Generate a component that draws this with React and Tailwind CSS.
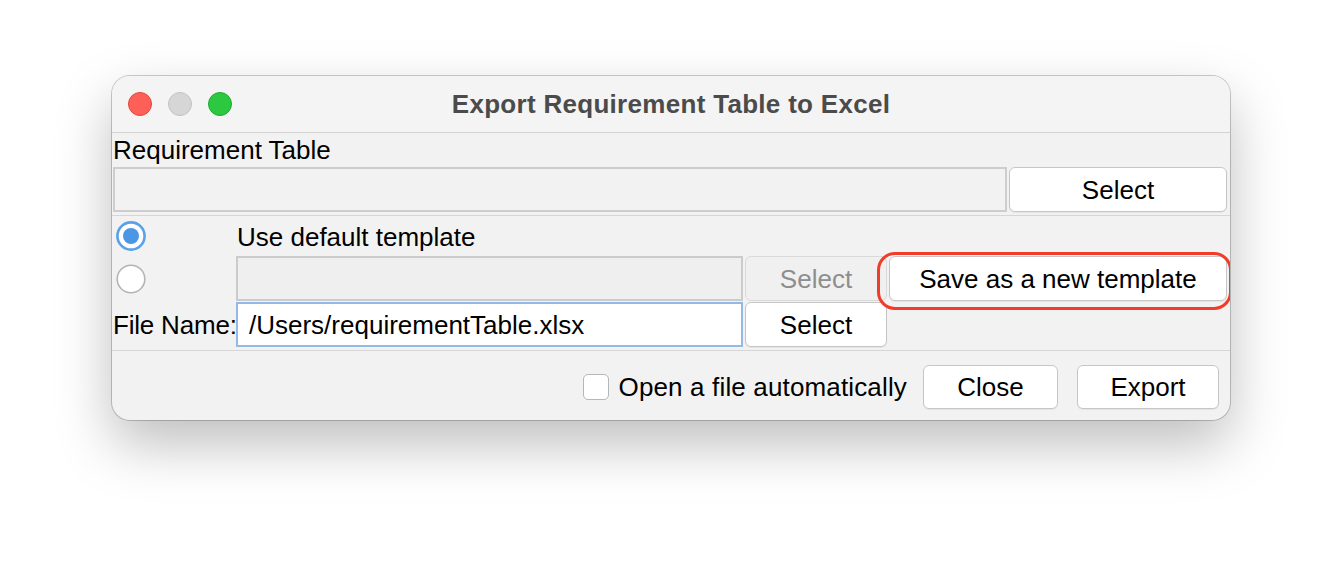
import React from "react";

const font = { fontFamily: '"Liberation Sans", Arial, Helvetica, sans-serif' };

function Btn({ children, className = "", disabled = false }) {
  return (
    <div
      className={
        "flex items-center justify-center rounded-[6px] border text-[26px] leading-none " +
        (disabled
          ? "bg-[#f0f0f0] border-[#d9d9d9] text-[#8e8e8e] "
          : "bg-white border-[#c6c6c6] text-black shadow-[0_1px_1px_rgba(0,0,0,0.06)] ") +
        className
      }
    >
      {children}
    </div>
  );
}

function RadioOn() {
  return (
    <svg width="30" height="30" viewBox="0 0 30 30">
      <circle cx="15" cy="15" r="13.6" fill="#ffffff" stroke="#5aa0ea" strokeWidth="2.6" />
      <circle cx="15" cy="15" r="8" fill="#4c96e6" />
    </svg>
  );
}

function RadioOff() {
  return (
    <svg width="30" height="30" viewBox="0 0 30 30">
      <circle cx="15" cy="15" r="13.8" fill="#ffffff" stroke="#b4b4b4" strokeWidth="1.6" />
    </svg>
  );
}

export default function App() {
  return (
    <div className="w-[1342px] h-[568px] bg-white pt-[76px] pl-[112px]" style={font}>
      <div className="w-[1118px] h-[344px] rounded-[18px] bg-[#f2f2f2] overflow-hidden flex flex-col shadow-[0_24px_56px_rgba(0,0,0,0.26),0_0_0_1px_rgba(0,0,0,0.2)]">
        {/* Title bar */}
        <div className="h-[57px] shrink-0 grid grid-cols-[1fr_auto_1fr] items-center border-b border-[#d3d3d3] bg-[#f4f4f4]">
          <div className="flex items-center gap-[16px] pl-[16px]">
            <div className="w-[24px] h-[24px] rounded-full bg-[#fe5f57] border border-[#e2463f]" />
            <div className="w-[24px] h-[24px] rounded-full bg-[#d6d6d6] border border-[#c2c2c2]" />
            <div className="w-[24px] h-[24px] rounded-full bg-[#2bc840] border border-[#1eab2e]" />
          </div>
          <div className="text-[26px] font-bold text-[#4b4b4b] tracking-[0.3px] leading-none">
            Export Requirement Table to Excel
          </div>
          <div />
        </div>

        {/* Label */}
        <div className="h-[34px] shrink-0 pl-[1px] text-[26px] leading-[34px] text-black">
          Requirement Table
        </div>

        {/* Row 1 */}
        <div className="h-[45px] shrink-0 flex gap-[2px] pl-[1px]">
          <div className="w-[894px] h-full bg-[#f2f2f2] border-2 border-[#cdcdcd]" />
          <Btn className="w-[218px] h-full">Select</Btn>
        </div>

        <div className="mt-[3px] h-px shrink-0 bg-[#d6d6d6]" />

        {/* Radio row 1 */}
        <div className="h-[40px] shrink-0 flex items-center pl-[1px]">
          <div className="w-[123px] pl-[3px] flex items-center">
            <RadioOn />
          </div>
          <div className="pl-[1px] pt-[2px] text-[26px] leading-none text-black">Use default template</div>
        </div>

        {/* Row 2 */}
        <div className="h-[45px] shrink-0 flex items-center pl-[1px]">
          <div className="w-[123px] pl-[3px] flex items-center">
            <RadioOff />
          </div>
          <div className="w-[507px] h-full bg-[#efefef] border-2 border-[#cbcbcb]" />
          <div className="w-[2px]" />
          <Btn disabled className="w-[142px] h-full">Select</Btn>
          <div className="w-[2px]" />
          <div className="relative w-[338px] h-full">
            <Btn className="w-full h-full">Save as a new template</Btn>
            <div className="absolute -left-[12px] -right-[5px] -top-[4px] -bottom-[9px] border-[3px] border-[#f03c28] rounded-[18px] pointer-events-none" />
          </div>
        </div>

        {/* Row 3 */}
        <div className="mt-px h-[45px] shrink-0 flex items-center pl-[1px]">
          <div className="w-[123px] text-[26px] leading-none text-black whitespace-nowrap tracking-[-0.2px]">File Name:</div>
          <div className="w-[507px] h-full bg-white border-2 border-[#94b9e6] flex items-center pl-[11px] text-[26px] leading-none text-black">
            /Users/requirementTable.xlsx
          </div>
          <div className="w-[2px]" />
          <Btn className="w-[142px] h-full">Select</Btn>
        </div>

        <div className="mt-[3px] h-px shrink-0 bg-[#d6d6d6]" />

        {/* Bottom row */}
        <div className="pt-[14px] h-[58px] shrink-0 flex items-start justify-end pr-[11px]">
          <div className="h-[44px] flex items-center">
            <div className="w-[26px] h-[26px] rounded-[5px] bg-white border-[1.5px] border-[#b6b6b6]" />
            <div className="pl-[10px] text-[26px] leading-none text-black whitespace-nowrap tracking-[0.15px]">
              Open a file automatically
            </div>
          </div>
          <Btn className="ml-[16px] w-[135px] h-[44px]">Close</Btn>
          <Btn className="ml-[19px] w-[142px] h-[44px]">Export</Btn>
        </div>
      </div>
    </div>
  );
}
